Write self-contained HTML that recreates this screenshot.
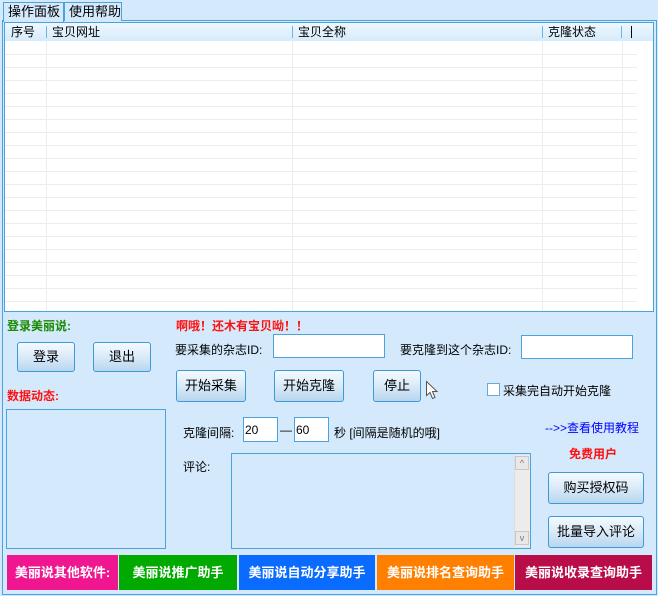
<!DOCTYPE html>
<html><head><meta charset="utf-8"><style>
*{margin:0;padding:0;box-sizing:border-box}
body{width:658px;height:596px;background:#d4eafc;font-family:"Liberation Sans","Noto Sans CJK SC",sans-serif;font-size:12px;color:#000;position:relative;overflow:hidden}
.a{position:absolute;white-space:nowrap}
.tab{position:absolute;top:2px;height:19px;border:1px solid #4aa3dc;border-bottom:none;background:#d4eafc;font-size:13px;line-height:17px;padding-left:4px}
.panel{position:absolute;left:2px;top:20px;width:655px;height:575px;border:1px solid #4aa3dc}
.tbl{position:absolute;left:4px;top:22px;width:650px;height:290px;background:#fff;border:1px solid #4aa3dc;overflow:hidden}
.hdr{position:absolute;left:0;top:0;width:100%;height:18px;background:linear-gradient(#eef7ff,#d6ebfb);font-size:12px;line-height:18px}
.row{position:absolute;left:0;width:632px;height:1px;background:#ececec}
.col{position:absolute;top:18px;width:1px;height:270px;background:#ececec}
.btn{position:absolute;border:1px solid #3d9ad9;border-radius:3px;background:linear-gradient(#f4faff,#dcecf9 45%,#b9d6ee);text-align:center;font-size:13px}
.inp{position:absolute;background:#fff;border:1px solid #4aa3dc}
.box{position:absolute;background:#d4eafc;border:1px solid #4aa3dc}
.bb{position:absolute;top:555px;height:35px;color:#fff;font-weight:bold;font-size:13px;line-height:35px;text-align:center}
</style></head><body>
<div class="panel"></div>
<div class="tab" style="left:3px;width:61px;height:20px;background:#d4eafc">操作面板</div>
<div class="tab" style="left:64px;width:58px;background:#d4eafc">使用帮助</div>
<div class="tbl">
 <div class="hdr">
  <span class="a" style="left:6px">序号</span>
  <span class="a" style="left:41px;top:3px;width:1px;height:12px;background:#6fb3e3"></span>
  <span class="a" style="left:47px">宝贝网址</span>
  <span class="a" style="left:287px;top:3px;width:1px;height:12px;background:#6fb3e3"></span>
  <span class="a" style="left:293px">宝贝全称</span>
  <span class="a" style="left:537px;top:3px;width:1px;height:12px;background:#6fb3e3"></span>
  <span class="a" style="left:543px">克隆状态</span>
  <span class="a" style="left:616px;top:3px;width:1px;height:12px;background:#6fb3e3"></span>
  <span class="a" style="left:626px;top:3px;width:1px;height:12px;background:#000"></span>
 </div>
 <div class="row" style="top:31px"></div><div class="row" style="top:44px"></div><div class="row" style="top:57px"></div><div class="row" style="top:70px"></div><div class="row" style="top:83px"></div><div class="row" style="top:96px"></div><div class="row" style="top:109px"></div><div class="row" style="top:122px"></div><div class="row" style="top:135px"></div><div class="row" style="top:148px"></div><div class="row" style="top:161px"></div><div class="row" style="top:174px"></div><div class="row" style="top:187px"></div><div class="row" style="top:200px"></div><div class="row" style="top:213px"></div><div class="row" style="top:226px"></div><div class="row" style="top:239px"></div><div class="row" style="top:252px"></div><div class="row" style="top:265px"></div><div class="row" style="top:278px"></div>
 <div class="col" style="left:41px"></div><div class="col" style="left:287px"></div><div class="col" style="left:537px"></div><div class="col" style="left:617px"></div>
</div>

<div class="a" style="left:7px;top:317px;color:#1a8a00;font-weight:bold">登录美丽说:</div>
<div class="btn" style="left:17px;top:342px;width:58px;height:30px;line-height:28px">登录</div>
<div class="btn" style="left:93px;top:342px;width:58px;height:30px;line-height:28px">退出</div>
<div class="a" style="left:7px;top:387px;color:#ff1010;font-weight:bold">数据动态:</div>
<div class="box" style="left:6px;top:409px;width:160px;height:140px"></div>

<div class="a" style="left:176px;top:317px;color:#ff1010;font-weight:bold">啊哦！还木有宝贝呦！！</div>
<div class="a" style="left:175px;top:341px">要采集的杂志ID:</div>
<div class="inp" style="left:273px;top:334px;width:112px;height:24px"></div>
<div class="a" style="left:400px;top:341px">要克隆到这个杂志ID:</div>
<div class="inp" style="left:521px;top:335px;width:112px;height:24px"></div>

<div class="btn" style="left:176px;top:370px;width:70px;height:32px;line-height:30px">开始采集</div>
<div class="btn" style="left:274px;top:370px;width:70px;height:32px;line-height:30px">开始克隆</div>
<div class="btn" style="left:373px;top:370px;width:48px;height:32px;line-height:30px">停止</div>
<svg class="a" style="left:425px;top:380px" width="14" height="20" viewBox="0 0 14 20"><path d="M1.5 1.5 L1.5 15.5 L5 12.5 L7.5 18.5 L10 17.5 L7.5 11.5 L12 11.5 Z" fill="#fff" stroke="#555" stroke-width="1"/></svg>
<div class="a" style="left:487px;top:383px;width:13px;height:13px;background:#fff;border:1px solid #6aa8d8"></div>
<div class="a" style="left:503px;top:382px;font-size:12px">采集完自动开始克隆</div>

<div class="a" style="left:183px;top:424px;font-size:12px">克隆间隔:</div>
<div class="inp" style="left:243px;top:417px;width:35px;height:25px;padding:5px 1px;font-size:12px">20</div>
<div class="a" style="left:280px;top:423px">—</div>
<div class="inp" style="left:294px;top:417px;width:35px;height:25px;padding:5px 1px;font-size:12px">60</div>
<div class="a" style="left:334px;top:424px;font-size:12px">秒 [间隔是随机的哦]</div>
<div class="a" style="left:545px;top:419px;color:#0000ff;font-size:12px">--&gt;&gt;查看使用教程</div>
<div class="a" style="left:569px;top:445px;color:#ff1010;font-weight:bold">免费用户</div>

<div class="a" style="left:183px;top:458px">评论:</div>
<div class="box" style="left:231px;top:453px;width:300px;height:96px">
 <div class="a" style="left:282px;top:1px;width:16px;height:92px;background:#ececec;border-left:1px solid #ddd"></div>
 <div class="a" style="left:283px;top:2px;width:14px;height:14px;background:#e8e8e8;border:1px solid #c8c8c8;font-size:9px;line-height:12px;text-align:center;color:#777">^</div>
 <div class="a" style="left:283px;top:77px;width:14px;height:14px;background:#e8e8e8;border:1px solid #c8c8c8;font-size:9px;line-height:12px;text-align:center;color:#777">v</div>
</div>
<div class="btn" style="left:548px;top:472px;width:96px;height:32px;line-height:30px">购买授权码</div>
<div class="btn" style="left:548px;top:516px;width:96px;height:32px;line-height:30px">批量导入评论</div>

<div class="bb" style="left:7px;width:111px;background:#f01690">美丽说其他软件:</div>
<div class="bb" style="left:119px;width:118px;background:#00aa00">美丽说推广助手</div>
<div class="bb" style="left:239px;width:136px;background:#0a6cff">美丽说自动分享助手</div>
<div class="bb" style="left:377px;width:137px;background:#ff8000">美丽说排名查询助手</div>
<div class="bb" style="left:515px;width:137px;background:#b80d48">美丽说收录查询助手</div>
</body></html>
